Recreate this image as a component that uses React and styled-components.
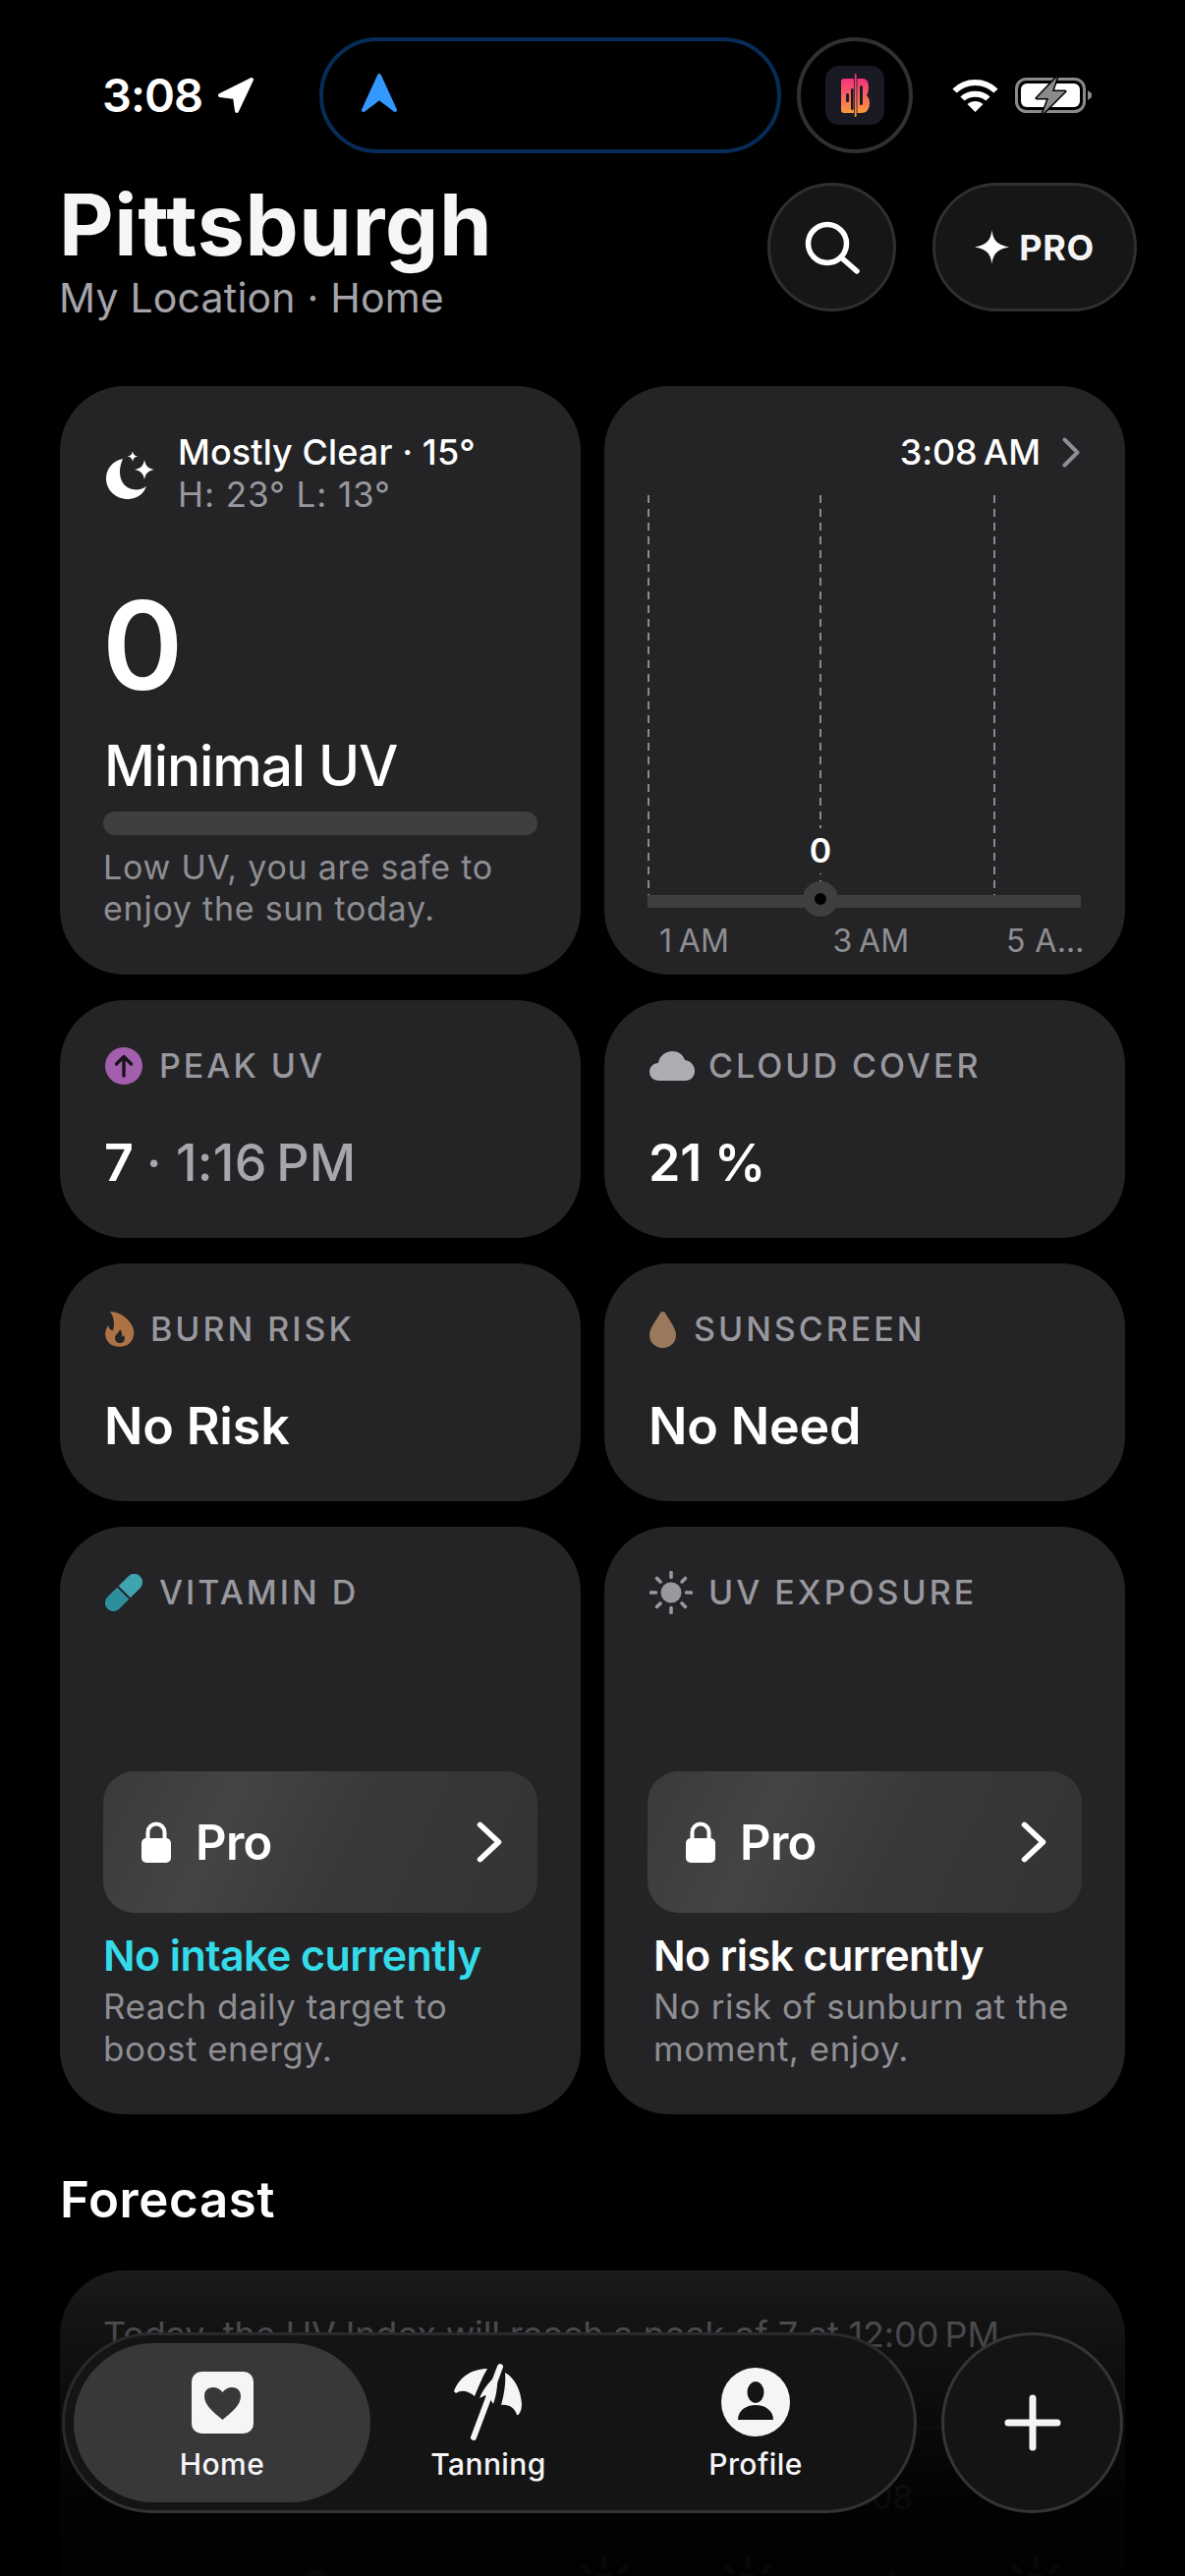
import React from "react";
import styled, { createGlobalStyle } from "styled-components";

const Global = createGlobalStyle`
  html, body { margin: 0; padding: 0; background: #000; }
  body { font-family: "Inter", "Liberation Sans", sans-serif; color: #fff; -webkit-font-smoothing: antialiased; }
  * { box-sizing: border-box; }
`;

const Page = styled.div`
  position: relative;
  width: 1206px;
  height: 2622px;
  overflow: hidden;
  background: #000;
  padding: 38px 61px 0;
`;

/* ---------- status bar ---------- */
const StatusBar = styled.div`
  display: flex;
  align-items: center;
  height: 118px;
  padding-left: 43px;
`;
const TimeGroup = styled.div`
  display: flex;
  align-items: center;
  gap: 15px;
  width: 221px;
`;
const Clock = styled.span`
  font-size: 47px;
  font-weight: 600;
  line-height: 54px;
  letter-spacing: -1px;
`;
const Island = styled.div`
  width: 470px;
  height: 118px;
  border: 4px solid #062c57;
  border-radius: 59px;
  display: flex;
  align-items: center;
  padding: 0 0 4px 38px;
`;
const Bubble = styled.div`
  width: 118px;
  height: 118px;
  margin-left: 16px;
  border: 4px solid #303030;
  border-radius: 50%;
  display: flex;
  align-items: center;
  justify-content: center;
`;
const StatusIcons = styled.div`
  display: flex;
  align-items: center;
  gap: 17px;
  margin-left: 40px;
`;

/* ---------- header ---------- */
const Header = styled.header`
  display: flex;
  justify-content: space-between;
  margin-top: 30px;
  height: 131px;
  margin-bottom: 76px;
`;
const TitleBlock = styled.div`
  margin-top: -2px;
`;
const City = styled.h1`
  margin: 0;
  font-size: 86px;
  font-weight: 700;
  line-height: 90px;
  letter-spacing: 0.6px;
  margin-left: -1px;
  color: #f6f6f6;
`;
const Place = styled.div`
  margin-top: 5px;
  font-size: 41px;
  line-height: 48px;
  color: #a4a4aa;
  letter-spacing: 0.2px;
  margin-left: -1px;
`;
const HeaderActions = styled.div`
  display: flex;
  gap: 37px;
  margin-right: -12px;
`;
const RoundButton = styled.div`
  height: 131px;
  min-width: 131px;
  padding: 0 ${(p) => (p.$wide ? "40px" : "0")};
  border-radius: 66px;
  background: #161616;
  border: 3px solid #2f2f31;
  display: flex;
  align-items: center;
  justify-content: center;
  gap: 10px;
`;
const ProText = styled.span`
  font-size: 36px;
  font-weight: 700;
  letter-spacing: 0.7px;
  color: #f4f4f4;
`;

/* ---------- cards ---------- */
const Grid = styled.div`
  display: grid;
  grid-template-columns: 530px 530px;
  grid-template-rows: 599px 242px 242px 598px;
  gap: 26px 24px;
`;
const Card = styled.section`
  background: #242426;
  border-radius: 66px;
  padding: 45px 44px;
`;
const StatCard = styled(Card)`
  padding-top: 47px;
`;
const ConditionRow = styled.div`
  display: flex;
  align-items: flex-start;
  gap: 23px;
`;
const ConditionIcon = styled.div`
  margin: 21px 0 0 3px;
  flex: none;
`;
const Condition = styled.div`
  font-size: 36px;
  font-weight: 450;
  line-height: 44px;
  letter-spacing: 0.1px;
`;
const HighLow = styled.div`
  font-size: 35px;
  line-height: 42px;
  color: #98989e;
  letter-spacing: 0.9px;
`;
const UvNumber = styled.div`
  margin-top: 70px;
  font-size: 125px;
  line-height: 125px;
  font-weight: 600;
  letter-spacing: -2px;
  margin-left: -1px;
`;
const UvName = styled.div`
  margin-top: 28px;
  font-size: 57px;
  line-height: 66px;
  font-weight: 500;
  letter-spacing: -1.2px;
  padding-left: 1px;
`;
const Meter = styled.div`
  margin-top: 13px;
  height: 24px;
  border-radius: 12px;
  background: #3f3f41;
`;
const Description = styled.p`
  margin: 12px 0 0;
  font-size: 34px;
  line-height: 42px;
  color: #8e8e93;
  letter-spacing: 0.75px;
  padding-left: ${(p) => (p.$inset ? "6px" : "0")};
  white-space: nowrap;
`;
const TimeRow = styled.div`
  display: flex;
  justify-content: flex-end;
  align-items: center;
  gap: 22px;
  height: 44px;
  padding-right: 2px;
`;
const TimeText = styled.span`
  font-size: 36px;
  font-weight: 450;
  letter-spacing: -0.1px;
`;
const ChartArea = styled.div`
  position: relative;
  height: 429px;
  margin-top: 22px;
`;
const ChartValue = styled.span`
  position: absolute;
  left: 176px;
  top: 339px;
  transform: translateX(-50%);
  padding: 0 4px;
  background: #242426;
  font-size: 34px;
  line-height: 46px;
  font-weight: 600;
`;
const HourLabels = styled.div`
  display: grid;
  grid-template-columns: repeat(3, 176.5px);
  margin-top: 5px;
`;
const HourLabel = styled.span`
  padding-left: 12px;
  font-size: 32px;
  line-height: 40px;
  color: #8e8e93;
  letter-spacing: 0.4px;
  white-space: nowrap;
`;
const StatHead = styled.div`
  display: flex;
  align-items: center;
  gap: ${(p) => p.$gap || 17}px;
  height: 40px;
  padding-left: 2px;
`;
const StatLabel = styled.span`
  font-size: 34px;
  line-height: 40px;
  font-weight: 500;
  letter-spacing: 3px;
  color: #98989e;
  white-space: nowrap;
`;
const StatValue = styled.div`
  margin-top: 49px;
  font-size: 52px;
  line-height: 60px;
  font-weight: 600;
  letter-spacing: -0.2px;
  padding-left: 1px;
  white-space: nowrap;
`;
const StatMuted = styled.span`
  color: #a6a6ab;
  font-weight: 500;
  letter-spacing: 0.3px;
`;
const ProPanel = styled.div`
  margin-top: 162px;
  height: 144px;
  border-radius: 32px;
  background: linear-gradient(115deg, #3a3a3c 0%, #444446 28%, #39393b 55%, #333335 100%);
  display: flex;
  align-items: center;
  padding: 0 36px 0 39px;
`;
const ProLabel = styled.span`
  margin-left: 25px;
  font-size: 49px;
  font-weight: 600;
  letter-spacing: -0.7px;
  flex: 1;
`;
const Verdict = styled.div`
  margin-top: 19px;
  font-size: 43px;
  line-height: 48px;
  font-weight: 600;
  letter-spacing: -0.6px;
  color: ${(p) => p.$color || "#fff"};
  padding-left: ${(p) => (p.$inset ? "6px" : "0")};
  white-space: nowrap;
`;
const Note = styled(Description)`
  margin-top: 7px;
  font-size: 35px;
  line-height: 43px;
  letter-spacing: 0.5px;
`;

/* ---------- forecast ---------- */
const SectionTitle = styled.h2`
  margin: 57px 0 42px;
  font-size: 51px;
  line-height: 60px;
  font-weight: 600;
  letter-spacing: 0.6px;
`;
const ForecastCard = styled(Card)`
  height: 400px;
  padding-top: 44px;
`;
const Summary = styled.p`
  margin: 0;
  font-size: 36px;
  line-height: 43px;
  color: #8e8e93;
  letter-spacing: -0.15px;
  white-space: nowrap;
`;
const Divider = styled.div`
  height: 2px;
  margin: 72px -44px 0;
  background: #3a3a3c;
`;
const HourColumns = styled.div`
  display: grid;
  grid-template-columns: repeat(7, 146.5px);
  margin: 48px 0 0 -3px;
`;
const HourCell = styled.div`
  display: flex;
  flex-direction: column;
  align-items: center;
  height: 150px;
`;
const HourTime = styled.span`
  height: 44px;
  margin-right: ${(p) => (p.$shift ? "30px" : "0")};
  font-size: 34px;
  line-height: 44px;
  color: #8e8e93;
`;
const WeatherSlot = styled.div`
  margin-top: 52px;
`;
const BottomFade = styled.div`
  position: absolute;
  left: 0;
  right: 0;
  bottom: 0;
  height: 355px;
  background: linear-gradient(to bottom, rgba(0,0,0,0) 0%, rgba(0,0,0,0.42) 22%, rgba(0,0,0,0.93) 78%, rgba(0,0,0,0.96) 100%);
  pointer-events: none;
`;

/* ---------- dock ---------- */
const Dock = styled.nav`
  position: absolute;
  left: 63px;
  right: 63px;
  bottom: 64px;
  display: flex;
  justify-content: space-between;
  height: 184px;
`;
const TabBar = styled.div`
  width: 870px;
  height: 184px;
  border-radius: 92px;
  background: #141415;
  border: 3px solid #333335;
  border-top-color: #2a2a2c;
  border-left-color: #2a2a2c;
  padding: 8px 9px;
  display: flex;
`;
const Tab = styled.div`
  flex: 0 0 ${(p) => p.$w}px;
  height: 162px;
  border-radius: 81px;
  background: ${(p) => (p.$active ? "#38383a" : "transparent")};
  display: flex;
  flex-direction: column;
  align-items: center;
  padding-top: 20px;
`;
const TabIcon = styled.div`
  height: 80px;
  display: flex;
  align-items: center;
  justify-content: center;
`;
const TabLabel = styled.span`
  margin-top: 5px;
  font-size: 30px;
  line-height: 36px;
  font-weight: 500;
  letter-spacing: 0.4px;
  color: #f5f5f7;
`;
const Fab = styled.div`
  width: 185px;
  height: 184px;
  border-radius: 50%;
  background: #141415;
  border: 3px solid #353537;
  display: flex;
  align-items: center;
  justify-content: center;
`;

/* ---------- drawings ---------- */
const LocationArrow = () => (
  <svg width="38" height="38" viewBox="0 0 38 38" fill="#fff" stroke="#fff" strokeWidth="4" strokeLinejoin="round">
    <path d="M35 3 L3 19 L18 21 L20 35 Z" />
  </svg>
);
const NavArrow = () => (
  <svg width="38" height="42" viewBox="0 0 38 42">
    <path d="M19 3 L35 38 L19 26 L3 38 Z" fill="#3399ff" stroke="#3399ff" strokeWidth="4" strokeLinejoin="round" />
  </svg>
);
const AppLogo = () => (
  <svg width="60" height="60" viewBox="0 0 60 60">
    <defs>
      <linearGradient id="lg" x1="0" y1="0" x2="0" y2="1">
        <stop offset="0" stopColor="#f5307f" />
        <stop offset="1" stopColor="#fb9a3c" />
      </linearGradient>
    </defs>
    <rect width="60" height="60" rx="14" fill="#1a1a24" />
    <path d="M16 16 Q16 13 19 13 H38 Q44 13 44 22 Q44 27 42 30 Q45 33 45 38 Q45 48 36 48 H19 Q16 48 16 45 Z" fill="url(#lg)" />
    <rect x="29" y="8" width="3.4" height="44" rx="1.5" fill="#1a1a24" />
    <rect x="29.8" y="8" width="1.8" height="44" rx="0.9" fill="url(#lg)" />
    <rect x="21" y="28" width="3" height="9" rx="1.5" fill="#1a1a24" />
    <rect x="26" y="23" width="2.6" height="22" rx="1.3" fill="#1a1a24" />
    <rect x="35" y="20" width="3" height="20" rx="1.5" fill="#1a1a24" />
  </svg>
);
const Wifi = () => (
  <svg width="47" height="36" viewBox="0 0 47 36" fill="none" stroke="#fff" strokeWidth="6">
    <path d="M2.5 13.5 C14 2 33 2 44.5 13.5" />
    <path d="M10.5 21.5 C17 15 30 15 36.5 21.5" />
    <path d="M23.5 35 L15.5 27 C20 23 27 23 31.5 27 Z" fill="#fff" stroke="none" />
  </svg>
);
const Battery = () => (
  <svg width="78" height="38" viewBox="0 0 78 38">
    <rect x="1.5" y="2.5" width="69" height="33" rx="10" fill="none" stroke="#8a8a8a" strokeWidth="3" />
    <rect x="6" y="7" width="60" height="24" rx="6" fill="#fff" />
    <path d="M74 14 L78 17 Q78.5 19 78 21 L74 24 Z" fill="#8a8a8a" />
    <path d="M43 0 L22 22 H34 L28 38 L51 15 H38 Z" fill="#8a8a8a" stroke="#000" strokeWidth="3" strokeLinejoin="round" paintOrder="stroke" />
  </svg>
);
const SearchIcon = () => (
  <svg width="56" height="54" viewBox="0 0 56 54" fill="none" stroke="#fff" strokeWidth="5.5" strokeLinecap="round">
    <circle cx="23" cy="23" r="19.5" />
    <path d="M37 37 L53 51" />
  </svg>
);
const Sparkle = ({ size = 35, color = "#fff" }) => (
  <svg width={size} height={size} viewBox="0 0 34 34">
    <path d="M17 0 C18 10 22 15 34 17 C22 19 18 24 17 34 C16 24 12 19 0 17 C12 15 16 10 17 0 Z" fill={color} />
  </svg>
);
const MoonStars = () => (
  <svg width="50" height="50" viewBox="0 0 50 50" fill="#fff">
    <path d="M17 8 C7 10 0 18 0 28 C0 40 10 49 22 49 C31 49 38 44 41 36 C37 39 32 40 27 39 C16 37 10 24 17 8 Z" />
    <path d="M27 0 C27.6 3.5 29 5 32.5 5.5 C29 6 27.6 7.5 27 11 C26.4 7.5 25 6 21.5 5.5 C25 5 26.4 3.5 27 0 Z" />
    <path d="M39 9 C40 15 43 18 49 19 C43 20 40 23 39 29 C38 23 35 20 29 19 C35 18 38 15 39 9 Z" />
  </svg>
);
const Chevron = ({ color = "#8e8e93", w = 18, h = 31, sw = 4 }) => (
  <svg width={w} height={h} viewBox="0 0 18 31" fill="none" stroke={color} strokeWidth={sw} strokeLinecap="round" strokeLinejoin="round" preserveAspectRatio="none">
    <path d="M2.5 2.5 L15.5 15.5 L2.5 28.5" />
  </svg>
);
const ChartDrawing = () => {
  const xs = [1, 176, 353];
  return (
    <svg width="441" height="429" viewBox="0 0 441 429">
      {xs.map((x) => (
        <line key={x} x1={x} y1="0" x2={x} y2="410" stroke="#8a8a8e" strokeWidth="2" strokeDasharray="8 6" />
      ))}
      <rect x="0" y="407" width="441" height="13" fill="#3f3f41" />
      <circle cx="176" cy="411" r="18" fill="#3f3f41" />
      <ellipse cx="176" cy="411" rx="6" ry="6" fill="#000" />
    </svg>
  );
};
const PeakIcon = () => (
  <svg width="38" height="38" viewBox="0 0 38 38">
    <circle cx="19" cy="19" r="19" fill="#a35fae" />
    <path d="M19 29 V10 M11.5 17 L19 9.5 L26.5 17" fill="none" stroke="#17131a" strokeWidth="3.4" strokeLinecap="round" strokeLinejoin="round" />
  </svg>
);
const CloudIcon = () => (
  <svg width="46" height="30" viewBox="0 0 46 30">
    <path d="M10 30 C4 30 0 26 0 21 C0 16 4 12 9 12 C10 5 16 0 23 0 C29 0 34 3 36 9 C42 10 46 14 46 20 C46 26 42 30 36 30 Z" fill="#aeaeb2" />
  </svg>
);
const FlameIcon = () => (
  <svg width="30" height="36" viewBox="0 0 30 36">
    <path fillRule="evenodd" d="M5 0 C12 0 21 4 26 12 C31 19 30 27 25 32 C20 37 9 37 4 32 C-1 27 -1 20 3 14 C4 18 6 19 8 19 C10 13 9 5 5 0 Z M15 18 C15 21 10 23 10 27 C10 30 12 32 15 32 C18 32 20 30 20 27 C20 26 19.5 25 19 24 C18.5 25 18 25.5 17 25.5 C17.5 23 17 20 15 18 Z" fill="#ad7344" />
  </svg>
);
const DropIcon = () => (
  <svg width="27" height="37" viewBox="0 0 27 37">
    <path d="M13.5 0 C15 0 16 1 17 3 C21 10 27 17 27 24 C27 31.5 21 37 13.5 37 C6 37 0 31.5 0 24 C0 17 6 10 10 3 C11 1 12 0 13.5 0 Z" fill="#9a795c" />
  </svg>
);
const PillIcon = () => (
  <svg width="38" height="38" viewBox="0 0 38 38">
    <g transform="rotate(45 19 19)">
      <path d="M10.5 18 V4 a8.5 8.5 0 0 1 17 0 V18 Z" fill="#3fa3b0" />
      <path d="M10.5 20 H27.5 V34 a8.5 8.5 0 0 1 -17 0 Z" fill="#2d8f9c" />
    </g>
  </svg>
);
const SunIcon = ({ color = "#98989e", size = 44 }) => (
  <svg width={size} height={size} viewBox="0 0 44 44">
    <circle cx="22" cy="22" r="10.5" fill={color} />
    {[0, 45, 90, 135, 180, 225, 270, 315].map((a) => (
      <line key={a} x1="22" y1="1.5" x2="22" y2="6.5" stroke={color} strokeWidth="3.6" strokeLinecap="round" transform={`rotate(${a} 22 22)`} />
    ))}
  </svg>
);
const LockIcon = () => (
  <svg width="30" height="42" viewBox="0 0 30 42">
    <path d="M6.5 18 V11 a8.5 8.5 0 0 1 17 0 V18" fill="none" stroke="#fff" strokeWidth="4" />
    <rect x="0" y="17" width="30" height="25" rx="5" fill="#fff" />
  </svg>
);
const HeartSquare = () => (
  <svg width="63" height="63" viewBox="0 0 63 63">
    <rect width="63" height="63" rx="10" fill="#f5f5f7" />
    <path d="M31.5 49 C22 41 13 34 13 25 C13 19 17 16 22 16 C26 16 29.5 18 31.5 21 C33.5 18 37 16 41 16 C46 16 50 19 50 25 C50 34 41 41 31.5 49 Z" fill="#38383a" />
  </svg>
);
const UmbrellaIcon = () => (
  <svg width="70" height="80" viewBox="0 0 70 80" fill="#f5f5f7">
    <path d="M20 76 L47 4" stroke="#f5f5f7" strokeWidth="6" strokeLinecap="round" />
    <path d="M0 29 C5 15 18 6 34 6 C28 16 25 25 21 34 C15 29 8 27 2 31 Z" />
    <path d="M44 12 C35 20 29 28 26 36 L32 33 C35 35 38 38 40 42 C43 34 45 22 44 12 Z" />
    <path d="M52 10 C62 15 68 28 69 42 C69 49 66 54 64 53 C62 46 56 42 48 43 C51 33 53 20 52 10 Z" />
  </svg>
);
const ProfileIcon = () => (
  <svg width="70" height="70" viewBox="0 0 70 70">
    <circle cx="35" cy="35" r="35" fill="#f5f5f7" />
    <ellipse cx="35" cy="25" rx="8.5" ry="11" fill="#141415" />
    <path d="M17 53 C17 44 25 38 35 38 C45 38 53 44 53 53 Z" fill="#141415" />
  </svg>
);
const PlusIcon = () => (
  <svg width="58" height="58" viewBox="0 0 58 58" stroke="#f5f5f7" strokeWidth="7" strokeLinecap="round">
    <path d="M29 4 V54 M4 29 H54" />
  </svg>
);

const hours = [
  { kind: "star" },
  { kind: "arc" },
  { kind: "star" },
  { kind: "sun" },
  { kind: "sun" },
  { kind: "sun", time: "3:08" },
  { kind: "sun" },
];

const WeatherGlyph = ({ kind }) => {
  if (kind === "star") return <Sparkle size={28} color="#8e8e93" />;
  if (kind === "arc") return <CloudIcon />;
  return <SunIcon color="#d9b52e" size={64} />;
};

export default function App() {
  return (
    <Page>
      <Global />
      <StatusBar>
        <TimeGroup>
          <Clock>3:08</Clock>
          <LocationArrow />
        </TimeGroup>
        <Island>
          <NavArrow />
        </Island>
        <Bubble>
          <AppLogo />
        </Bubble>
        <StatusIcons>
          <Wifi />
          <Battery />
        </StatusIcons>
      </StatusBar>

      <Header>
        <TitleBlock>
          <City>Pittsburgh</City>
          <Place>My Location · Home</Place>
        </TitleBlock>
        <HeaderActions>
          <RoundButton>
            <SearchIcon />
          </RoundButton>
          <RoundButton $wide>
            <Sparkle />
            <ProText>PRO</ProText>
          </RoundButton>
        </HeaderActions>
      </Header>

      <Grid>
        <Card>
          <ConditionRow>
            <ConditionIcon>
              <MoonStars />
            </ConditionIcon>
            <div>
              <Condition>Mostly Clear · 15°</Condition>
              <HighLow>H: 23° L: 13°</HighLow>
            </div>
          </ConditionRow>
          <UvNumber>0</UvNumber>
          <UvName>Minimal UV</UvName>
          <Meter />
          <Description>
            Low UV, you are safe to
            <br />
            enjoy the sun today.
          </Description>
        </Card>

        <Card>
          <TimeRow>
            <TimeText>3:08{"\u202F"}AM</TimeText>
            <Chevron />
          </TimeRow>
          <ChartArea>
            <ChartDrawing />
            <ChartValue>0</ChartValue>
          </ChartArea>
          <HourLabels>
            <HourLabel>1{"\u202F"}AM</HourLabel>
            <HourLabel>3{"\u202F"}AM</HourLabel>
            <HourLabel>5 A…</HourLabel>
          </HourLabels>
        </Card>

        <StatCard>
          <StatHead>
            <PeakIcon />
            <StatLabel>PEAK UV</StatLabel>
          </StatHead>
          <StatValue>
            7 <StatMuted>· 1:16{"\u202F"}PM</StatMuted>
          </StatValue>
        </StatCard>
        <StatCard>
          <StatHead $gap={14}>
            <CloudIcon />
            <StatLabel>CLOUD COVER</StatLabel>
          </StatHead>
          <StatValue>21 %</StatValue>
        </StatCard>

        <StatCard>
          <StatHead $gap={16}>
            <FlameIcon />
            <StatLabel>BURN RISK</StatLabel>
          </StatHead>
          <StatValue>No Risk</StatValue>
        </StatCard>
        <StatCard>
          <StatHead $gap={18}>
            <DropIcon />
            <StatLabel>SUNSCREEN</StatLabel>
          </StatHead>
          <StatValue>No Need</StatValue>
        </StatCard>

        <StatCard>
          <StatHead $gap={17}>
            <PillIcon />
            <StatLabel>VITAMIN D</StatLabel>
          </StatHead>
          <ProPanel>
            <LockIcon />
            <ProLabel>Pro</ProLabel>
            <Chevron color="#fff" w={26} h={42} sw={4} />
          </ProPanel>
          <Verdict $color="#34dbe8">No intake currently</Verdict>
          <Note>
            Reach daily target to
            <br />
            boost energy.
          </Note>
        </StatCard>
        <StatCard>
          <StatHead $gap={16}>
            <SunIcon />
            <StatLabel>UV EXPOSURE</StatLabel>
          </StatHead>
          <ProPanel>
            <LockIcon />
            <ProLabel>Pro</ProLabel>
            <Chevron color="#fff" w={26} h={42} sw={4} />
          </ProPanel>
          <Verdict $inset>No risk currently</Verdict>
          <Note $inset>
            No risk of sunburn at the
            <br />
            moment, enjoy.
          </Note>
        </StatCard>
      </Grid>

      <SectionTitle>Forecast</SectionTitle>
      <ForecastCard>
        <Summary>Today, the UV Index will reach a peak of 7 at 12:00{"\u202F"}PM</Summary>
        <Divider />
        <HourColumns>
          {hours.map((h, i) => (
            <HourCell key={i}>
              <HourTime $shift={!!h.time}>{h.time}</HourTime>
              <WeatherSlot>
                <WeatherGlyph kind={h.kind} />
              </WeatherSlot>
            </HourCell>
          ))}
        </HourColumns>
      </ForecastCard>
      <BottomFade />

      <Dock>
        <TabBar>
          <Tab $w={302} $active>
            <TabIcon>
              <HeartSquare />
            </TabIcon>
            <TabLabel>Home</TabLabel>
          </Tab>
          <Tab $w={240}>
            <TabIcon>
              <UmbrellaIcon />
            </TabIcon>
            <TabLabel>Tanning</TabLabel>
          </Tab>
          <Tab $w={304}>
            <TabIcon>
              <ProfileIcon />
            </TabIcon>
            <TabLabel>Profile</TabLabel>
          </Tab>
        </TabBar>
        <Fab>
          <PlusIcon />
        </Fab>
      </Dock>
    </Page>
  );
}
